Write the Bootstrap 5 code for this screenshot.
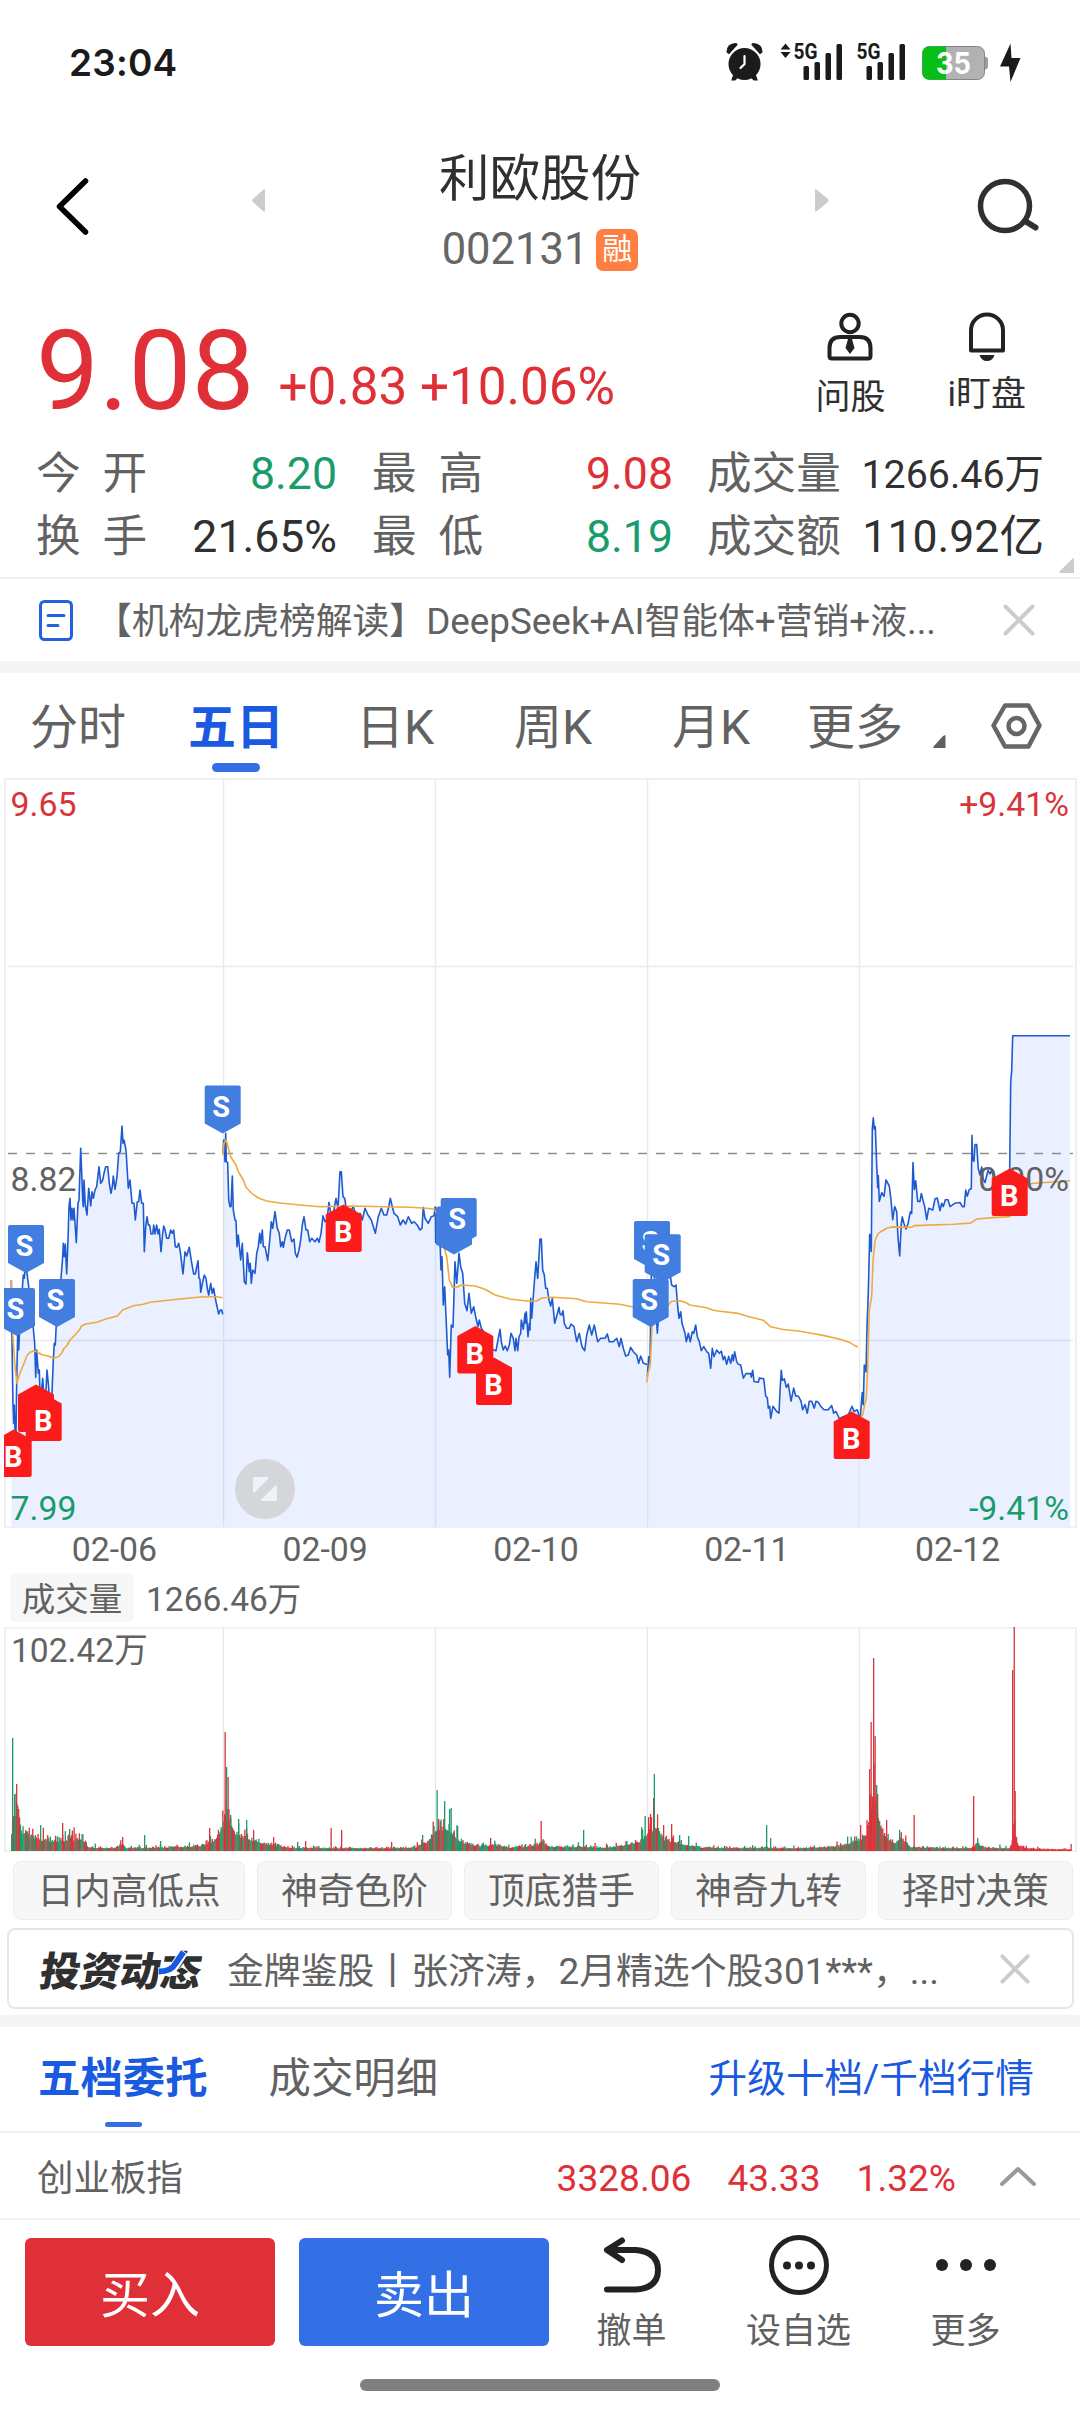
<!DOCTYPE html>
<html lang="zh-CN">
<head>
<meta charset="utf-8">
<meta name="viewport" content="width=device-width, initial-scale=1">
<title>利欧股份 002131</title>
<link href="https://cdn.jsdelivr.net/npm/bootstrap@5.3.0/dist/css/bootstrap.min.css" rel="stylesheet">
<style>
:root{--up:#df3037;--down:#1a9b6c;--brand:#1a5ae0;--ink:#303030;--dim:#626262}
html,body{background:#fff}
body{width:1080px;height:2412px;overflow:hidden;margin:0;font-family:Roboto,"Noto Sans CJK SC",sans-serif;color:var(--ink);line-height:1}
svg{display:block;flex:none}
.nowrap-all *{white-space:nowrap}
.c-up{color:var(--up)}.c-down{color:var(--down)}.c-dim{color:var(--dim)}.c-brand{color:var(--brand)}
.statusbar{height:120px;padding:4px 48px 0 69px}
.clock{font:600 37px/1 Inter,sans-serif;color:#1b1b1b;letter-spacing:.2px}
.appbar{height:170px}
.appbar .side{width:190px}
.title-box{padding-top:29px}
.stock-name{font-size:50.500px;line-height:60px}
.code-line{padding-top:13px}
.stock-code{font-size:43.500px;line-height:56px;font-weight:400;color:#666}
.tag-rong{width:42px;height:42px;margin-left:8px;border-radius:7px;background:#ff7f43;color:#fff;font-size:30px;line-height:40px}
.quote{height:289px;border-bottom:2px solid #f1f1f1;padding:0 36px 0 36px}
.price-row{height:153px}
.last{font-size:112px;line-height:110px;padding-top:26px}
.chg{font-size:51.200px;line-height:50px;padding:72px 0 0 24px}
.tools{padding-top:22px;gap:62px;margin-right:18px}
.tool{font-size:35px;line-height:42px}
.stat{height:63px}
.stat>div{font-size:44.600px;line-height:63px}
.stat>.small-num{font-size:39.400px}
.lab{color:var(--dim)}
.pair{width:111px}
.val{width:190px}
.expand{margin:-11px -30px 0 0}
.news{height:82px;padding:0 45px 0 39px}
.news p{font-size:36.800px;line-height:48px;margin:0;padding-top:4px}
.divider{height:12px;background:#f4f4f4}
.periods{height:105px;display:grid;grid-template-columns:158px 168px 158px 158px 135px 125px 58px 1fr;padding-left:30px;font-size:48px;color:var(--dim)}
.periods>div{line-height:109px}
.bar-ind{height:9px;width:48px;border-radius:5px;background:#3370e6;left:24px;bottom:10px}
.bar-ind.thin{left:67px;bottom:-26px;width:37px;height:5px}
.dates{height:44px;padding:0 17px 0 9px;font-size:33.800px;line-height:44px;color:var(--dim)}
.vol-head{height:55px;padding:1px 0 0 10px;font-size:33.500px;color:var(--dim)}
.vol-pill{width:124px;height:49px;line-height:53px;background:#f7f7f7;border-radius:5px}
.vol-val{margin-left:12px;line-height:54px}
.chips{height:58px;margin-top:9px;padding:0 7px 0 13px;gap:12px;font-size:36.700px;color:var(--dim)}
.chips span{height:59px;width:195px;line-height:60px;background:#f7f7f7;border:1px solid #ededed;border-radius:8px}
.chips span:first-child{width:232px}
.promo{height:81px;margin:9px 6px 6px 7px;border:2px solid #e6e6e6;border-radius:8px;padding:0 42px 0 27px}
.promo p{font-size:36.850px;line-height:48px;margin:0 0 0 19px;padding-top:6px}
.promo svg{overflow:visible}
.orders{height:106px;padding:1px 46px 0 38px;border-bottom:2px solid #f1f1f1;font-size:42.400px}
.orders .upgrade{font-size:38.700px}
.index-row{height:87px;padding:0 43px 0 37px;border-bottom:2px solid #f1f1f1;font-size:36.500px}
.index-row>div{padding-top:7px}
.index-nums{gap:36px;font-size:37.100px}
.trade{height:159px;padding:18px 0 0 25px}
.btn-trade{width:250px;height:108px;border-radius:6px;border:0;color:#fff;font-size:50px;line-height:108px;padding:4px 0 0}
.act{font-size:35px;line-height:42px;color:#606060;margin:-6px 0 0 -1px}
.act>div{width:167px}
.act .cap{padding-top:15px}
.homebar{width:360px;height:12px;border-radius:6px;background:#808080}
</style>
<script src="https://cdn.jsdelivr.net/npm/bootstrap@5.3.0/dist/js/bootstrap.bundle.min.js"></script>
</head>
<body class="nowrap-all">

<header class="statusbar d-flex align-items-center justify-content-between">
  <div class="clock">23:04</div>
  <svg width="310" height="44" viewBox="722 40 310 44" fill="#1b1b1b">
    <circle cx="744.5" cy="64" r="16"/>
    <path d="M727 52q0-8 9-8.500l1 1-8 9zM762 52q0-8-9-8.500l-1 1 8 9zM734 74l-2 6h3l4-4zM755 74l2 6h-3l-4-4z" stroke="#1b1b1b" stroke-width="1.200"/>
    <path d="M744.500 56v8l-4 4" fill="none" stroke="#fff" stroke-width="2.200" stroke-linecap="round"/>
    <path d="M785.500 43.500l5 6h-10zM785.500 58l5-6h-10z"/>
    <g font-family="Roboto,sans-serif" font-weight="700" font-size="21.500"><text x="793.500" y="58.500" textLength="24" lengthAdjust="spacingAndGlyphs">5G</text><text x="856.500" y="58.500" textLength="24" lengthAdjust="spacingAndGlyphs">5G</text></g>
    <g id="bars"><rect x="803.500" y="66" width="5.500" height="14" rx="1.500"/><rect x="814.500" y="62" width="5.500" height="18" rx="1.500"/><rect x="825.500" y="53" width="5.500" height="27" rx="1.500"/><rect x="836.500" y="44" width="5.500" height="36" rx="1.500"/></g>
    <use href="#bars" x="63"/>
    <rect x="922.500" y="46.500" width="62" height="33" rx="7" fill="#b2b2b2" stroke="#848484"/>
    <path d="M985 56.500q3 .5 3 3v7q0 2.500-3 3z" fill="#9c9c9c"/>
    <path d="M946 46.500h-16.500q-7 0-7 7v19q0 7 7 7H946z" fill="#05bf14"/>
    <text x="953.500" y="74" font-family="Inter,sans-serif" font-weight="700" font-size="29.500" fill="#fff" text-anchor="middle" textLength="35" lengthAdjust="spacingAndGlyphs">35</text>
    <path d="M1010.500 43.500l-10.500 23h9l1.500 15.500 10-24h-9z"/>
  </svg>
</header>

<section class="appbar d-flex justify-content-between">
  <div class="side d-flex pt-5">
    <svg width="190" height="90" viewBox="0 168 190 90"><path d="M85.500 181L59.500 206.500l26 25.500" fill="none" stroke="#000" stroke-width="5.500" stroke-linecap="round" stroke-linejoin="round"/></svg>
    <svg width="90" height="90" viewBox="190 168 90 90"><path d="M265 189.500v21q0 1.500-2 .5l-10-9q-1.500-1.500 0-3l10-9q2-1.500 2-.5z" fill="#ccc"/></svg>
  </div>
  <div class="title-box d-flex flex-column align-items-center">
    <div class="stock-name">利欧股份</div>
    <div class="code-line d-flex align-items-center">
      <span class="stock-code">002131</span><span class="tag-rong text-center">融</span>
    </div>
  </div>
  <div class="side d-flex justify-content-end pt-5">
    <svg width="270" height="90" viewBox="810 168 270 90"><path d="M815 189.500v21q0 1.500 2 .5l11-9q1.500-1.500 0-3l-11-9q-2-1.500-2-.5z" fill="#ccc"/><circle cx="1005" cy="206" r="24.500" fill="none" stroke="#303030" stroke-width="5.500"/><path d="M1025 221l10.500 6.500" stroke="#303030" stroke-width="6" stroke-linecap="round"/></svg>
  </div>
</section>

<section class="quote">
  <div class="price-row d-flex justify-content-between">
    <div class="d-flex align-items-start c-up">
      <div class="last">9.08</div>
      <div class="chg">+0.83 +10.06%</div>
    </div>
    <div class="tools d-flex">
      <div class="tool text-center d-flex flex-column align-items-center">
        <svg width="50" height="50" viewBox="825 312 50 50" fill="none" stroke="#222" stroke-width="4"><circle cx="850" cy="323.500" r="8.700"/><path d="M829.500 356v-8q0-11 11-11h19q11 0 11 11v8q0 2.500-2.500 2.500h-36q-2.500 0-2.500-2.500z"/><path d="M848 339h4l2.500 9-4.500 6-4.500-6z" fill="#222" stroke="none"/></svg>
        <div style="padding-top:15px">问股</div>
      </div>
      <div class="tool text-center d-flex flex-column align-items-center">
        <svg width="50" height="50" viewBox="962 312 50 50"><path d="M971 350.500v-20a16 16 0 0 1 32 0v20z" fill="none" stroke="#222" stroke-width="4" stroke-linejoin="round"/><path d="M979.500 355h15q-2 6-7.500 6t-7.500-6z" fill="#222"/></svg>
        <div style="padding-top:12px">i盯盘</div>
      </div>
    </div>
  </div>
  <div class="stat d-flex">
    <div class="lab pair d-flex justify-content-between"><span>今</span><span>开</span></div>
    <div class="val c-down text-end">8.20</div>
    <div class="lab pair d-flex justify-content-between" style="margin-left:35px"><span>最</span><span>高</span></div>
    <div class="val c-up text-end">9.08</div>
    <div class="lab" style="margin-left:34px">成交量</div>
    <div class="small-num ms-auto">1266.46万</div>
  </div>
  <div class="stat d-flex">
    <div class="lab pair d-flex justify-content-between"><span>换</span><span>手</span></div>
    <div class="val text-end">21.65%</div>
    <div class="lab pair d-flex justify-content-between" style="margin-left:35px"><span>最</span><span>低</span></div>
    <div class="val c-down text-end">8.19</div>
    <div class="lab" style="margin-left:34px">成交额</div>
    <div class="ms-auto">110.92亿</div>
  </div>
  <svg class="expand ms-auto" width="15" height="16" viewBox="0 0 15 16"><path d="M15 0v15H2q-3 0-1-2L13 1z" fill="#ccc"/></svg>
</section>

<section class="news d-flex align-items-center">
  <svg width="35" height="41" viewBox="0 0 35 41" fill="none" stroke="#2560e0" stroke-width="3"><rect x="1.500" y="1.500" width="31" height="38" rx="4"/><path d="M9 15.500h16M9 25.500h10" stroke-linecap="round"/></svg>
  <p class="c-dim" style="margin-left:21px">【机构龙虎榜解读】DeepSeek+AI智能体+营销+液...</p>
  <svg class="ms-auto" width="32" height="32" viewBox="0 0 32 32"><path d="M2.500 2.500l27 27M29.500 2.500l-27 27" stroke="#ccc" stroke-width="4" stroke-linecap="round"/></svg>
</section>
<div class="divider"></div>

<nav class="periods">
  <div>分时</div>
  <div class="c-brand fw-bold position-relative">五日<div class="bar-ind position-absolute"></div></div>
  <div>日K</div><div>周K</div><div>月K</div><div>更多</div>
  <svg width="20" height="105" viewBox="0 0 20 105"><path d="M13.500 62v13H3q-3 0-1-2L11 63z" fill="#606060"/></svg>
  <svg width="52" height="105" viewBox="990 673 52 105" fill="none" stroke="#666" stroke-width="4.500"><path d="M1005 705.500h23.500l11 20-11 21H1005l-11.500-21z" stroke-linejoin="round"/><circle cx="1016.500" cy="726" r="8"/></svg>
</nav>

<svg id="price" width="1080" height="750" viewBox="0 778 1080 750" font-family="Roboto,sans-serif">
  <g id="area" fill="#eaf0ff"></g>
  <g fill="none" stroke="#1e3250" stroke-opacity=".1" stroke-width="1.400">
    <path d="M223.500 779v748M435.500 779v748M647.500 779v748M859.500 779v748M8 966.500h1065M8 1340.500h1065"/>
  </g>
  <path d="M5 779H1076V1527.500H5z" fill="none" stroke="#efefef" stroke-width="2"/>
  <path d="M8 1153.500H1073" stroke="#8e8e8e" stroke-width="1.300" stroke-dasharray="9 9"/>
  <g id="lines" fill="none" stroke-width="1.600" stroke-linejoin="round"></g>
  <g font-size="33.800" fill="#626262">
    <text x="10.500" y="816" fill="#d8343a">9.65</text><text x="1069" y="816" fill="#d8343a" text-anchor="end">+9.41%</text>
    <text x="10.500" y="1190.500">8.82</text><text x="1069" y="1190.500" text-anchor="end">0.00%</text>
    <text x="10.500" y="1519.500" fill="#1a9b6c">7.99</text><text x="1069" y="1519.500" fill="#1a9b6c" text-anchor="end">-9.41%</text>
  </g>
  <clipPath id="plot"><path d="M4 778h1076v750H4z"/></clipPath>
  <g id="marks" clip-path="url(#plot)" font-weight="700" font-size="29" text-anchor="middle" fill="#fff"></g>
  <circle cx="265" cy="1489" r="30" fill="#d5d6da"/>
  <path d="M254 1477h14q2 0 .5 1.500L255 1492q-2 1.500-2-.5V1478q0-1 1-1zM276 1501h-14q-2 0-.5-1.500L275 1486q2-1.500 2 .5v13.500q0 1-1 1z" fill="#eff2fb"/>
</svg>

<div class="dates d-flex justify-content-between text-center">
  <span class="flex-fill">02-06</span><span class="flex-fill">02-09</span><span class="flex-fill">02-10</span><span class="flex-fill">02-11</span><span class="flex-fill">02-12</span>
</div>

<div class="vol-head d-flex">
  <div class="vol-pill text-center">成交量</div>
  <div class="vol-val">1266.46万</div>
</div>
<svg id="volume" width="1080" height="225" viewBox="0 1627 1080 225" font-family='Roboto,"Noto Sans CJK SC",sans-serif'>
  <path d="M5 1627.500H1076V1851.500H5z" fill="none" stroke="#efefef" stroke-width="2"/>
  <path d="M223.500 1628v223M435.500 1628v223M647.500 1628v223M859.500 1628v223" stroke="#e6e8ec" stroke-width="1.300"/>
  <g id="vbars"></g>
  <text x="11" y="1662" font-size="33.600" fill="#626262">102.42万</text>
</svg>

<div class="chips d-flex text-center"><span>日内高低点</span><span>神奇色阶</span><span>顶底猎手</span><span>神奇九转</span><span>择时决策</span></div>

<div class="promo d-flex align-items-center">
  <svg width="172" height="56" viewBox="36 1940.500 172 56" font-family='"Noto Sans CJK SC",sans-serif'>
    <g transform="translate(40 1985.500) skewX(-9)"><text x="-2" y="0" font-weight="900" font-size="40.500" fill="#303030" textLength="161">投资动态</text></g>
    <path d="M158 1971.500q14 0 18-8l8-12.500" fill="none" stroke="#fff" stroke-width="9"/>
    <path d="M158.500 1971q13 0 17-8l8-11.500" fill="none" stroke="#1a5ae0" stroke-width="6"/>
  </svg>
  <p class="c-dim">金牌鉴股丨张济涛，2月精选个股301***，...</p>
  <svg class="ms-auto" width="30" height="30" viewBox="0 0 32 32"><path d="M2.500 2.500l27 27M29.500 2.500l-27 27" stroke="#ccc" stroke-width="4" stroke-linecap="round"/></svg>
</div>
<div class="divider"></div>

<div class="orders d-flex align-items-center">
  <div class="c-brand fw-bold position-relative">五档委托<div class="bar-ind thin position-absolute"></div></div>
  <div class="c-dim" style="margin-left:61px">成交明细</div>
  <div class="upgrade c-brand ms-auto">升级十档/千档行情</div>
</div>
<div class="index-row d-flex align-items-center">
  <div class="c-dim">创业板指</div>
  <div class="index-nums c-up ms-auto d-flex"><span>3328.06</span><span>43.33</span><span>1.32%</span></div>
  <svg style="margin-left:43px" width="38" height="22" viewBox="0 0 38 22"><path d="M3 19L19 4l16 15" fill="none" stroke="#999" stroke-width="4" stroke-linecap="round" stroke-linejoin="round"/></svg>
</div>

<div class="trade d-flex">
  <button class="btn btn-trade" style="background:#df3037">买入</button>
  <button class="btn btn-trade" style="background:#3370e6;margin-left:24px">卖出</button>
  <div class="act d-flex text-center">
    <div class="d-flex flex-column align-items-center">
      <svg width="70" height="64" viewBox="598 2232 70 64" fill="none" stroke="#222" stroke-width="6" stroke-linecap="round" stroke-linejoin="round"><path d="M608 2250h29q22 2 22 20 0 18-22 19.500h-29M623 2240.500l-15 9.500 15 10"/></svg>
      <div class="cap">撤单</div>
    </div>
    <div class="d-flex flex-column align-items-center">
      <svg width="70" height="64" viewBox="764 2232 70 64" fill="#222"><circle cx="799" cy="2265" r="27.500" fill="none" stroke="#222" stroke-width="5"/><circle cx="787" cy="2265.500" r="4"/><circle cx="799" cy="2265.500" r="4"/><circle cx="811" cy="2265.500" r="4"/></svg>
      <div class="cap">设自选</div>
    </div>
    <div class="d-flex flex-column align-items-center">
      <svg width="70" height="64" viewBox="931 2232 70 64" fill="#222"><circle cx="942" cy="2265" r="6"/><circle cx="966" cy="2265" r="6"/><circle cx="990" cy="2265" r="6"/></svg>
      <div class="cap">更多</div>
    </div>
  </div>
</div>
<div class="homebar mx-auto"></div>

<script>
const NS='http://www.w3.org/2000/svg';
const add=(id,tag,attrs,text)=>{const e=document.createElementNS(NS,tag);for(const k in attrs)e.setAttribute(k,attrs[k]);if(text)e.textContent=text;document.getElementById(id).appendChild(e)};
// each segment: x origin, y origin, y units per pixel, then x,y pairs (x has 3 units per pixel)
const seg=(ox,oy,ky,s)=>s.trim().split(/\s+/).map(p=>{const[a,b]=p.split(',').map(Number);return[ox+a/3,oy+b/ky]});
const A=s=>seg(0,1040,3,s),B=s=>seg(360,1040,3,s),C=s=>seg(720,1000,2.904,s);
const priceDays=[
 A('34,720 36,900 39,1090 41,1150 43,1095 45,1170 48,1180 50,1020 53,880 56,930 60,840 66,760 70,705 73,715 77,660 81,700 86,740 92,800 100,865 104,910 107,1012 110,930 115,1000 118,990 121,1090 124,1060 128,1015 132,1070 136,1090 141,990 145,1030 150,1090 156,1060 160,960 163,910 166,915 169,850 175,790 183,715 188,650 190,610 193,650 196,612 200,702 204,600 207,500 210,475 213,540 216,505 219,540 222,505 229,608 234,490 237,480 242,325 245,400 248,480 250,500 252,420 256,495 261,525 266,445 272,498 276,455 280,475 285,450 290,440 297,380 302,430 308,420 312,400 317,380 323,380 328,430 333,460 337,440 340,408 345,448 351,410 356,340 361,335 366,258 369,310 372,300 378,330 385,445 390,420 396,490 402,490 406,540 412,485 416,485 420,450 425,490 430,490 433,635 437,560 441,530 445,555 449,555 453,582 458,582 461,555 465,582 470,555 474,582 478,568 483,635 488,580 491,558 495,568 500,595 506,595 512,570 517,580 521,570 526,620 531,622 536,610 541,635 549,702 555,635 560,648 568,622 574,662 581,702 586,702 594,662 597,715 600,718 602,757 608,725 613,705 618,715 622,745 626,765 632,730 637,760 641,745 645,770 650,795 656,822 661,810 665,810 668,823'),
 A('669,340 671,300 675,365 677,280 679,365 683,368 686,480 690,500 693,500 697,408 700,510 705,540 708,542 711,620 715,585 722,660 727,610 733,725 738,732 742,638 748,695 751,670 754,730 758,690 765,700 770,640 775,620 779,580 782,610 787,570 790,620 795,620 803,662 808,615 814,545 818,565 825,515 832,565 838,580 842,620 847,605 850,622 855,595 862,570 868,570 875,605 882,597 886,640 891,652 897,630 902,600 907,555 912,530 918,570 923,570 929,605 935,595 945,605 952,595 957,607 963,580 969,527 975,545 981,540 987,487 992,520 1000,520 1008,475 1014,505 1020,395 1024,395 1029,470 1034,475 1038,500 1045,525 1060,500 1070,530 1080,520').concat(B('7,540 15,505 24,525 34,540 46,580 55,530 64,505 72,525 80,525 86,500 91,475 97,500 102,520 113,530 121,555 129,540 137,552 145,530 155,550 162,545 172,555 180,570 186,565 190,502 195,535 205,550 214,530 222,527 226,500')),
 B('226,500 227,608 230,590 240,600 243,690 246,650 250,795 254,740 259,850 263,945 266,930 269,1012 274,855 279,862 285,665 290,730 297,640 302,680 308,700 314,790 321,812 327,760 334,820 341,800 348,835 354,860 358,840 364,865 380,890 400,930 408,932 413,905 420,868 424,905 430,930 436,918 442,932 448,915 453,880 460,895 465,932 468,895 473,932 477,890 482,880 484,840 490,868 495,820 497,850 499,815 504,890 508,850 510,870 512,775 515,835 522,740 528,665 533,715 540,597 544,597 548,690 553,705 557,745 562,745 567,780 572,798 577,775 584,850 592,822 597,802 600,822 605,825 609,812 613,850 620,865 628,865 633,852 642,860 650,905 658,880 666,920 674,932 680,885 688,855 695,885 703,855 708,880 713,905 722,895 735,895 742,882 748,905 760,905 770,895 778,920 783,895 790,925 797,948 805,945 812,922 820,935 830,945 836,970 842,948 850,970 858,972 860,975'),
 B('862,1010 866,950 870,970 874,700 882,690 888,800 892,880 900,780 910,720 930,700 935,735 942,740 948,735 953,800 957,835 962,815 966,850 975,880 979,905 985,880 991,905 997,875 1001,880 1007,855 1012,890 1018,905 1024,932 1031,920 1040,935 1046,940 1052,985 1057,925 1062,950 1070,930 1078,940').concat(C('4,1020 10,1045 14,1035 20,1058 26,1035 32,1055 37,1030 40,1048 44,1022 50,1050 55,1058 62,1060 70,1098 78,1085 92,1085 94,1095 98,1075 102,1108 115,1110 118,1098 131,1100 137,1150 142,1155 145,1185 149,1180 152,1215 159,1180 170,1195 177,1200 181,1120 184,1075 187,1105 193,1100 199,1125 205,1115 213,1165 221,1127 227,1150 235,1150 243,1165 248,1190 255,1175 262,1200 268,1165 275,1165 283,1185 288,1165 295,1168 302,1180 312,1190 325,1190 335,1178 341,1200 348,1195 358,1215 370,1210 385,1205 396,1180 402,1195 412,1190 418,1210')),
 C('421,1210 427,1140 430,1175 433,1060 438,1080 441,950 445,850 449,680 454,730 457,375 460,342 463,375 466,368 470,480 473,545 475,510 478,585 485,560 492,570 498,522 508,540 513,580 518,638 524,600 530,615 534,690 539,743 544,650 547,630 552,650 558,665 564,650 571,615 575,620 579,472 583,550 587,525 593,585 600,585 604,562 610,585 614,600 620,638 626,605 638,610 645,578 652,575 660,612 665,590 670,600 676,580 684,580 690,600 705,590 720,588 727,600 733,600 737,552 742,570 748,550 754,548 756,393 758,465 762,468 765,420 770,420 775,490 780,508 785,485 790,520 795,530 804,495 810,505 815,495 825,520 845,540 860,520 869,490 872,240 875,205 878,104 1050,104')];
const avgDays=[
 A('34,720 38,880 45,980 51,1030 58,1005 66,985 74,965 80,948 90,937 102,932 112,936 125,944 145,948 160,955 175,950 185,940 192,925 200,918 210,900 225,885 238,870 245,858 255,853 290,847 320,836 352,828 368,810 400,797 430,793 450,787 490,782 540,777 600,771 630,770 650,770 668,773'),
 A('669,345 672,310 679,300 684,320 692,350 708,375 715,395 730,420 738,442 755,460 775,474 800,483 840,489 900,495 960,500 1040,498 1080,499').concat(B('80,500 150,502 200,505 226,508')),
 B('226,510 240,560 252,620 260,650 268,720 278,742 290,742 306,735 345,738 375,748 405,765 450,777 500,783 530,783 545,774 580,772 650,776 680,785 780,793 815,800 858,806'),
 B('860,1028 864,1000 871,975 876,860 890,815 925,795 935,784 960,782 975,787 990,795 1040,803 1060,811 1080,814').concat(C('55,910 85,919 130,930 152,949 190,957 240,962 270,967 310,974 360,985 390,995 408,1006 414,1007')),
 C('421,1212 428,1205 434,1175 439,1155 443,1070 448,900 455,860 459,760 465,700 473,680 482,673 500,663 515,659 575,660 582,655 700,651 752,648 770,636 820,632 870,629 880,560 935,533 1050,525')];
const str=d=>d.map(p=>p[0].toFixed(1)+','+p[1].toFixed(1)).join(' ');
priceDays.forEach(d=>{const l=d[d.length-1][0];add('area','polygon',{points:`${d[0][0]},1527 ${str(d)} ${l},1527`});add('lines','polyline',{points:str(d),stroke:'#1f5bd0'})});
avgDays.forEach(d=>add('lines','polyline',{points:str(d),stroke:'#eeaa3e'}));

// trade markers: type, tip x, top y, covered (a covered marker has no letter)
[['S',26,1225],['S',17,1288],['S',57,1279],['B',13.700,1429.500],['B',36,1384.500,1],['B',43.700,1393.500],['S',222.700,1085.500],['B',343.700,1204.500],['S',454,1206.500,1],['S',458.700,1198],['B',475.300,1326],['B',494,1357.500],['S',652,1221],['S',662.700,1234.300],['S',650.700,1279],['B',851.700,1411.500],['B',1009.700,1168.500]].forEach(([t,x,y,covered])=>{
  add('marks','path',t==='S'?{d:`M${x-16} ${y}h32q2 0 2 2v36l-18 10l-18-10v-36q0-2 2-2z`,fill:'#417ee0'}:{d:`M${x} ${y}l18 10v35.500q0 2-2 2h-32q-2 0-2-2V${y+10}z`,fill:'#fb1b1b'});
  if(!covered)add('marks','text',{x:t==='S'?x-1.500:x-.5,y:t==='S'?y+31:y+37.5},t);
});

// volume: baseline envelope (x, height) plus individual spikes (x, height, colour)
const env=[[11,28],[15,60],[19,28],[28,24],[45,14],[65,16],[82,18],[88,5],[115,4],[122,10],[126,4],[160,5],[200,7],[214,16],[221,34],[225,60],[229,44],[236,24],[248,18],[262,11],[275,8],[290,4.5],[340,4],[380,3.5],[415,5],[428,15],[436,32],[447,34],[455,20],[463,12],[478,7],[495,9],[510,5],[530,7],[542,12],[550,6],[585,6],[600,4.5],[620,7],[640,14],[648,28],[656,36],[662,18],[680,11],[700,5],[760,4],[800,4],[840,7],[860,17],[868,28],[873,90],[878,40],[884,20],[895,12],[902,18],[910,6],[940,4],[970,4],[978,10],[985,4.5],[1010,4],[1013,30],[1018,8],[1028,3],[1070,2]];
let r=7;const rnd=()=>(r=(r*16807)%2147483647)/2147483647;
const G='#1a9b6c',R='#d8343a';
const vbar=(x,h,c)=>add('vbars','rect',{x:x.toFixed(2),y:(1851-h).toFixed(1),width:1.3,height:h.toFixed(1),fill:c});
let k=0;
for(let x=11;x<1070;x+=.88){while(k<env.length-2&&x>env[k+1][0])k++;const[a,b]=env[k],[c,d]=env[k+1];const h=b+(d-b)*(x-a)/(c-a);
 vbar(x,Math.max(x>1030?1.5:2.6,h*(.6+.55*rnd()*rnd()+(rnd()>.93?.5:0))),x>1010?R:rnd()>(x>865&&x<880?.15:.5)?R:G)}
[[12,113,G],[14,57,G],[16,67,R],[18,42,R],[40,26,G],[62,28,R],[69,22,G],[122,14,R],[144,16,G],[160,10,G],[209,23,R],[224.500,119,R],[226,84,G],[227.500,74,R],[230,36,G],[238,32,G],[246,31,G],[273,14,R],[297,9,G],[305,10,R],[330.500,23,R],[341,21,R],[391,9,R],[422,16,G],[436.500,61,G],[438,32,R],[444,50,G],[449,42,G],[450.500,43,G],[457,25,G],[490,13,R],[540.500,30,R],[583,21,G],[644.500,35,G],[648,34,R],[653,53,R],[653.700,77,G],[663,26,R],[671,27,R],[679,16,G],[688,15,G],[766,26,G],[770,13,G],[860,26,R],[867,26,R],[869,82,R],[870.500,129,R],[873,193,R],[874.500,115,R],[876,66,G],[877,57,R],[879,30,G],[886,31,R],[899,21,G],[913.500,36,R],[973,55,R],[977,13,G],[1012,181,R],[1013.600,224,R],[1014.500,60,R],[1070.500,7,R]].forEach(b=>vbar(...b));
</script>
</body>
</html>
